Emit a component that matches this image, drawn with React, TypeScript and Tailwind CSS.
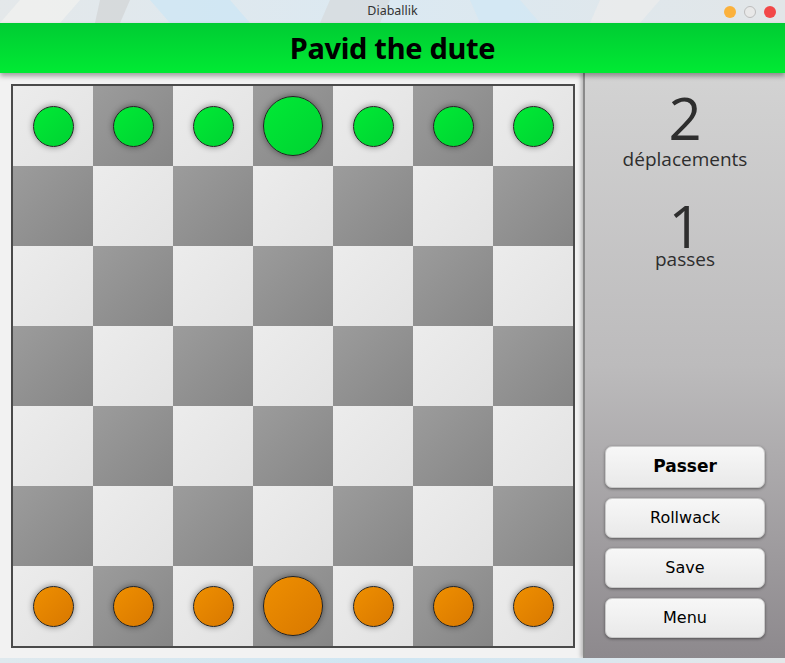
import React from 'react';

const COLS = 7;

function Piece({ color, big }: { color: 'green' | 'orange'; big?: boolean }) {
  const fill =
    color === 'green'
      ? 'bg-gradient-to-br from-[#00ea35] to-[#00d232]'
      : 'bg-gradient-to-br from-[#ef8f00] to-[#d87800]';
  const size = big ? 'w-[60px] h-[60px]' : 'w-[41px] h-[41px]';
  return (
    <div
      className={`${size} ${fill} rounded-full border border-[#222] shadow-[0_0_6px_rgba(0,0,0,0.45)]`}
    />
  );
}

function Board() {
  const cells = [];
  for (let r = 0; r < 7; r++) {
    for (let c = 0; c < COLS; c++) {
      const light = (r + c) % 2 === 0;
      let piece = null;
      if (r === 0) piece = <Piece color="green" big={c === 3} />;
      if (r === 6) piece = <Piece color="orange" big={c === 3} />;
      cells.push(
        <div
          key={`${r}-${c}`}
          className={`w-[80px] h-[80px] flex items-center justify-center ${
            light
              ? 'bg-gradient-to-br from-[#ececec] to-[#e2e2e2]'
              : 'bg-gradient-to-br from-[#9c9c9c] to-[#868686]'
          }`}
        >
          {piece}
        </div>
      );
    }
  }
  return (
    <div className="border-2 border-[#4a4a4a] grid grid-cols-[repeat(7,80px)] w-[564px] h-[564px]">
      {cells}
    </div>
  );
}

function GameButton({ label, bold, tall }: { label: string; bold?: boolean; tall?: boolean }) {
  return (
    <button
      className={`w-[160px] ${tall ? 'h-[42px]' : 'h-[40px]'} rounded-[7px] bg-gradient-to-b from-[#f7f7f7] to-[#e9e9e9] border border-[#c8c8c8] shadow-[0_1px_3px_rgba(0,0,0,0.45)] text-black ${
        bold ? 'font-bold text-[17px]' : 'text-[16px]'
      }`}
      style={{ fontFamily: '"DejaVu Sans", Verdana, sans-serif' }}
    >
      {label}
    </button>
  );
}

export default function App() {
  return (
    <div
      className="w-[785px] h-[663px] flex flex-col overflow-hidden bg-[#e6eef2]"
      style={{ fontFamily: '"Open Sans", "Noto Sans", sans-serif' }}
    >
      {/* window title bar */}
      <div className="h-[23px] relative flex items-center justify-center bg-gradient-to-r from-[#e4e8ea] via-[#dbe9f2] to-[#e2e6e8]">
        <svg className="absolute inset-0" width="785" height="23">
          <polygon points="20,0 80,0 60,23 0,23" fill="#f2f2f0" opacity="0.7" />
          <polygon points="150,0 230,0 250,23 170,23" fill="#c8e6f6" opacity="0.6" />
          <polygon points="330,0 390,0 380,23 320,23" fill="#d4d4d4" opacity="0.5" />
          <polygon points="470,0 520,0 540,23 480,23" fill="#cfe8f6" opacity="0.6" />
          <polygon points="600,0 660,0 640,23 590,23" fill="#ececec" opacity="0.7" />
          <polygon points="100,0 130,0 120,23 95,23" fill="#cbcbcb" opacity="0.5" />
        </svg>
        <span className="relative text-[12.5px] text-[#333]" style={{ fontFamily: '"Noto Sans", sans-serif' }}>
          Diaballik
        </span>
        <div className="absolute right-[9px] top-[6px] flex gap-[8px]">
          <div className="w-[12px] h-[12px] rounded-full bg-[#fbb13c]" />
          <div className="w-[12px] h-[12px] rounded-full bg-[#e8e8e8] border border-[#bdbdbd]" />
          <div className="w-[12px] h-[12px] rounded-full bg-[#f24848]" />
        </div>
      </div>

      {/* header */}
      <div className="relative z-10 h-[50px] flex items-center justify-center bg-gradient-to-b from-[#00cc33] to-[#00ea33] shadow-[0_3px_5px_rgba(0,0,0,0.35)]">
        <h1 className="text-[29px] font-bold text-black tracking-[-0.3px]" style={{ fontFamily: '"Noto Sans", sans-serif' }}>
          Pavid the dute
        </h1>
      </div>

      {/* body */}
      <div className="flex h-[585px]">
        <div className="w-[583px] bg-[#f2f2f2] pl-[11px] pt-[11px]">
          <Board />
        </div>
        <div className="w-[202px] flex flex-col items-center border-l-2 border-[#8a8a8a] shadow-[-2px_0_4px_rgba(0,0,0,0.25)] bg-gradient-to-b from-[#d3d3d3] via-[#bcbbbc] to-[#8d898d] text-[#2e2e2e]">
          <div className="mt-[19px] text-[58px] leading-[52px]">2</div>
          <div className="mt-[4px] text-[19px] leading-[22px]">déplacements</div>
          <div className="mt-[30px] text-[58px] leading-[52px]">1</div>
          <div className="-mt-[2px] text-[19px] leading-[18px]">passes</div>
          <div className="mt-auto mb-[20px] flex flex-col gap-[10px]">
            <GameButton label="Passer" bold tall />
            <GameButton label="Rollwack" />
            <GameButton label="Save" />
            <GameButton label="Menu" />
          </div>
        </div>
      </div>

      <div className="h-[5px] bg-gradient-to-r from-[#dfe9ee] via-[#cfe6f3] to-[#e4e8ea]" />
    </div>
  );
}
